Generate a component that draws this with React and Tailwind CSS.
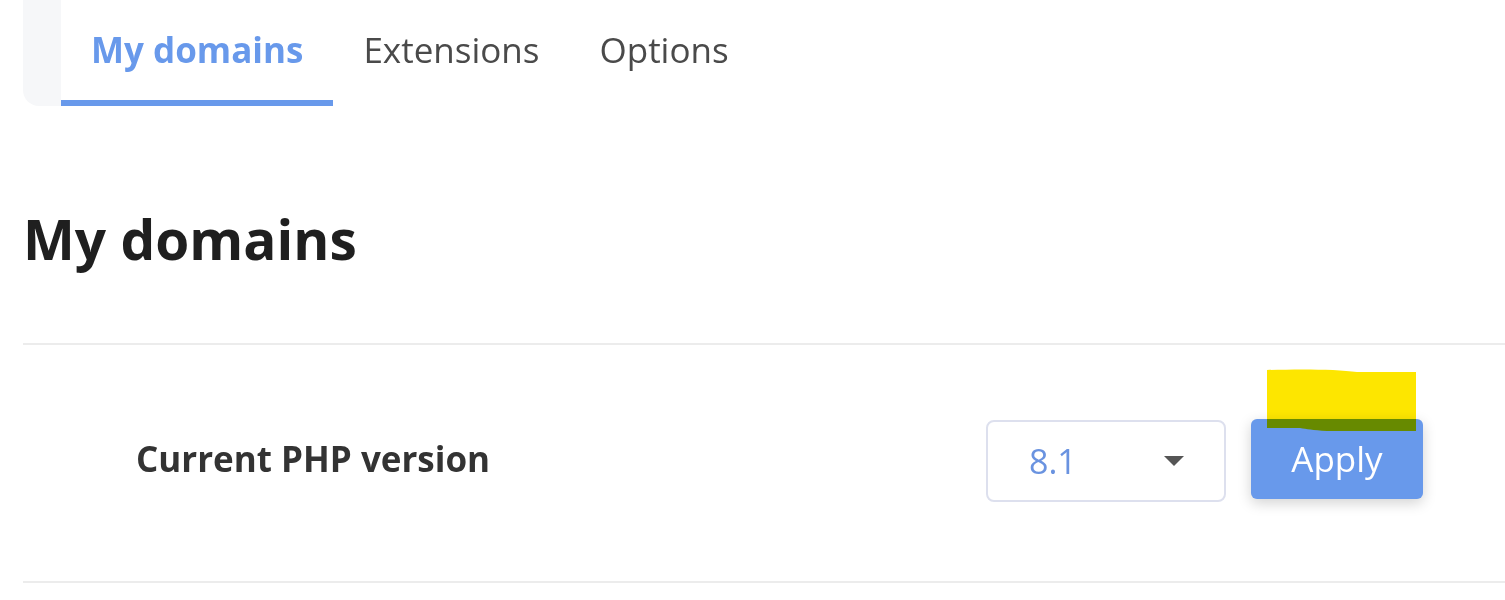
import React from 'react';

const tabs = ['My domains', 'Extensions', 'Options'];

const App = () => {
  const active = 0;

  return (
    <div className="min-h-[600px] bg-white pl-[23px] font-['Open_Sans',sans-serif]">
      {/* tab bar */}
      <div className="flex h-[106px]">
        <div className="w-[38px] rounded-bl-2xl bg-[#f6f7f9]" />
        {tabs.map((tab, i) => (
          <div
            key={tab}
            className={
              i === active
                ? 'flex items-center border-b-[6px] border-[#6899eb] px-[30px] text-[35px] font-bold text-[#6899eb]'
                : 'flex items-center border-b-[6px] border-transparent px-[30px] text-[35px] text-[#4a4a4a]'
            }
          >
            {tab}
          </div>
        ))}
      </div>

      <h1 className="mt-[105px] text-[55px] font-bold leading-none text-[#1f1f1f]">My domains</h1>

      {/* php version row */}
      <div className="mt-[77px] flex h-[240px] items-center border-y-2 border-[#ececec] pl-[113px] pr-[82px]">
        <div className="mb-[7px] text-[35px] font-bold text-[#333333]">Current PHP version</div>
        <div className="mb-[4px] ml-auto flex items-center gap-[25px]">
          <div className="flex h-[82px] w-[240px] items-center justify-between rounded-lg border-2 border-[#dde0ee] pl-[41px] pr-[40px]">
            <span className="text-[34px] text-[#6a93e0]">8.1</span>
            <svg width="20" height="10" viewBox="0 0 20 10">
              <path d="M0 0 L20 0 L10 10 Z" fill="#555555" />
            </svg>
          </div>
          <div className="relative mb-[4px]">
            <button className="flex h-[80px] w-[172px] items-center justify-center rounded-md bg-[#6899eb] text-[35px] text-white shadow-[0_4px_14px_rgba(0,0,0,0.18)]">
              Apply
            </button>
            {/* highlighter mark */}
            <svg
              className="pointer-events-none absolute left-[16px] top-[-50px] mix-blend-multiply"
              width="150"
              height="64"
              viewBox="0 0 150 64"
            >
              <path
                d="M0 1 C30 0 70 0 90 3 L149 3 L149 62 L60 62 C45 61 40 60 33 59 L0 59 Z"
                fill="#fde600"
              />
            </svg>
          </div>
        </div>
      </div>
    </div>
  );
};

export default App;
